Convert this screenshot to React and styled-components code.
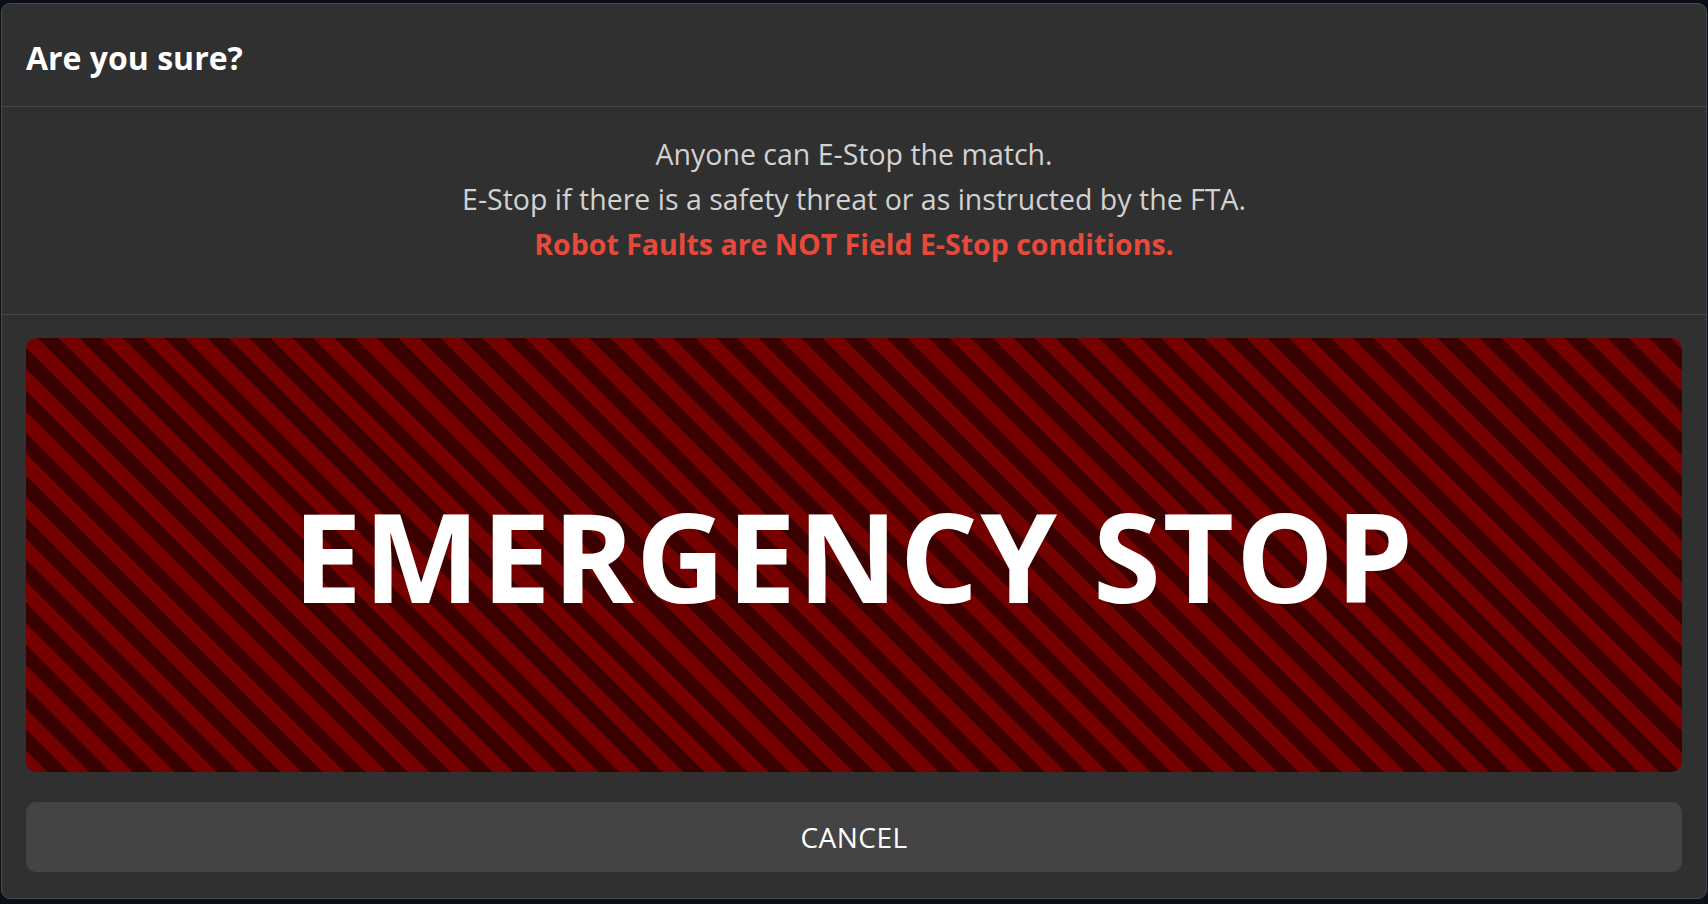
import React from 'react';
import styled, { createGlobalStyle } from 'styled-components';

const GlobalStyle = createGlobalStyle`
    html, body {
        margin: 0;
        padding: 0;
        background: #0b0f17;
        font-family: 'Open Sans', 'Noto Sans', sans-serif;
    }
    * {
        box-sizing: border-box;
    }
`;

const Backdrop = styled.div`
    width: 100vw;
    height: 100vh;
    padding: 3px 1px 5px 1px;
    display: flex;
`;

const Modal = styled.div`
    flex: 1;
    display: flex;
    flex-direction: column;
    background: #303030;
    border: 1px solid #4a4a4a;
    border-radius: 9px;
    overflow: hidden;
`;

const Header = styled.div`
    height: 103px;
    display: flex;
    align-items: center;
    padding: 4px 24px 0;
    border-bottom: 1px solid #474747;

    h2 {
        margin: 0;
        font-size: 32px;
        font-weight: 700;
        color: #fff;
    }
`;

const Body = styled.div`
    padding: 25px 24px 47px;
    border-bottom: 1px solid #474747;
    text-align: center;
`;

const Line = styled.p`
    margin: 0;
    font-size: 28.5px;
    line-height: 45px;
    color: ${p => (p.$warn ? '#e8493b' : '#d2d2d2')};
    font-weight: ${p => (p.$warn ? 700 : 400)};
`;

const Footer = styled.div`
    flex: 1;
    display: flex;
    flex-direction: column;
    gap: 30px;
    padding: 23px 24px 24px;
`;

const StopButton = styled.button`
    height: 434px;
    border: none;
    border-radius: 10px;
    background: repeating-linear-gradient(
        45deg,
        #740000 0px,
        #740000 15px,
        #3b0000 15px,
        #3b0000 30px
    );
    color: #fff;
    font-family: 'Open Sans', sans-serif;
    font-size: 123px;
    font-weight: 700;
    letter-spacing: 2px;
    cursor: pointer;
`;

const CancelButton = styled.button`
    height: 70px;
    border: none;
    border-radius: 10px;
    background: #444444;
    color: #fff;
    font-family: 'Open Sans', sans-serif;
    font-size: 28px;
    letter-spacing: 0.5px;
    cursor: pointer;
`;

export default function App() {
    return (
        <>
            <GlobalStyle />
            <Backdrop>
                <Modal>
                    <Header>
                        <h2>Are you sure?</h2>
                    </Header>
                    <Body>
                        <Line>Anyone can E-Stop the match.</Line>
                        <Line>E-Stop if there is a safety threat or as instructed by the FTA.</Line>
                        <Line $warn>Robot Faults are NOT Field E-Stop conditions.</Line>
                    </Body>
                    <Footer>
                        <StopButton>EMERGENCY STOP</StopButton>
                        <CancelButton>CANCEL</CancelButton>
                    </Footer>
                </Modal>
            </Backdrop>
        </>
    );
}
